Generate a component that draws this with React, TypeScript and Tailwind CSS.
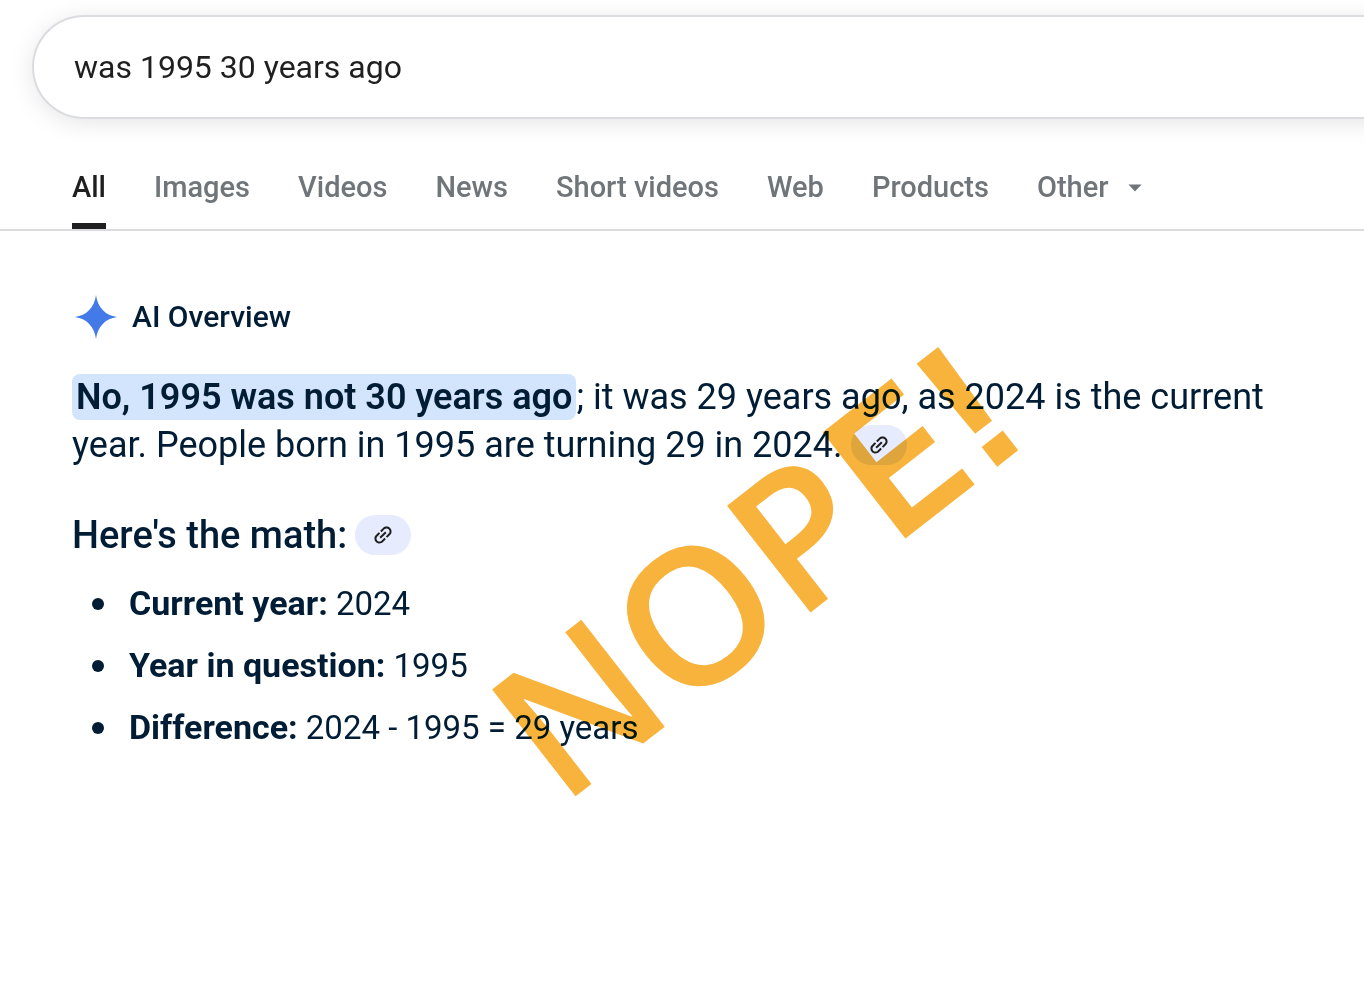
import { useState } from 'react';

const tabs = ['All', 'Images', 'Videos', 'News', 'Short videos', 'Web', 'Products'];

const facts = [
  { label: 'Current year:', value: '2024' },
  { label: 'Year in question:', value: '1995' },
  { label: 'Difference:', value: '2024 - 1995 = 29 years' },
];

function SparkIcon() {
  return (
    <svg viewBox="0 0 48 48" className="size-12 shrink-0" aria-hidden="true">
      <path
        d="M24 2C25.6 14.5 33.5 22.4 45 24C33.5 25.6 25.6 33.5 24 46C22.4 33.5 14.5 25.6 3 24C14.5 22.4 22.4 14.5 24 2Z"
        fill="#4479e8"
      />
    </svg>
  );
}

function LinkChip({ label }: { label: string }) {
  return (
    <button
      type="button"
      aria-label={label}
      className="inline-flex h-10 w-14 items-center justify-center rounded-full bg-[#e6ebfd] align-baseline"
    >
      <svg viewBox="0 0 24 24" className="size-6 -rotate-45" fill="#1f1f1f" aria-hidden="true">
        <path d="M11 17H7c-1.38 0-2.56-.49-3.54-1.46S2 13.38 2 12s.49-2.56 1.46-3.54S5.62 7 7 7h4v2H7c-.83 0-1.54.29-2.13.88S4 11.17 4 12s.29 1.54.87 2.13S6.17 15 7 15h4v2ZM8 13v-2h8v2H8Zm5 4v-2h4c.83 0 1.54-.29 2.13-.87S20 12.83 20 12s-.29-1.54-.87-2.12S17.83 9 17 9h-4V7h4c1.38 0 2.56.49 3.54 1.46S22 10.62 22 12s-.49 2.56-1.46 3.54S18.38 17 17 17h-4Z" />
      </svg>
    </button>
  );
}

export default function App() {
  const [query, setQuery] = useState('was 1995 30 years ago');

  return (
    <div className="min-h-screen overflow-hidden bg-white font-['Roboto',sans-serif] text-[#1f1f1f]">
      <form role="search" className="-mr-12 pt-[15px] pl-8" onSubmit={(e) => e.preventDefault()}>
        <input
          type="text"
          aria-label="Search"
          value={query}
          onChange={(e) => setQuery(e.target.value)}
          className="block h-[104px] w-full rounded-l-full border-2 border-r-0 border-[#dadce0] bg-white pr-20 pl-10 text-[32px] shadow-[0_4px_24px_rgba(0,0,0,0.1)] outline-none"
        />
      </form>

      <nav
        aria-label="Result types"
        className="mt-[26px] flex gap-12 border-b-2 border-[#dadce0] pl-[72px] text-[29px] font-medium whitespace-nowrap text-[#70757a]"
      >
        {tabs.map((tab, i) => (
          <a
            key={tab}
            href={`#${tab}`}
            aria-current={i === 0 ? 'page' : undefined}
            className="flex h-[84px] items-center border-b-[6px] border-transparent pt-2 aria-[current=page]:border-[#1f1f1f] aria-[current=page]:text-[#1f1f1f]"
          >
            {tab}
          </a>
        ))}
        <button type="button" className="flex h-[84px] items-center gap-5 border-b-[6px] border-transparent pt-2">
          Other
          <svg viewBox="0 0 14 8" className="h-2 w-3.5" fill="currentColor" aria-hidden="true">
            <path d="M0.5 0.5H13.5L7 7.5Z" />
          </svg>
        </button>
      </nav>

      <main className="relative px-[72px] pt-[62px] text-[#001d35]">
        <h1 className="flex items-center gap-3 text-[30px] leading-[44px] font-medium">
          <SparkIcon />
          AI Overview
        </h1>

        <p className="mt-8 text-[36px] leading-[48px]">
          <mark className="rounded-lg bg-[#d2e5fd] px-1 py-0.5 font-semibold text-inherit">
            No, 1995 was not 30 years ago
          </mark>
          ; it was 29 years ago, as 2024 is the current year. People born in 1995 are turning 29 in 2024.{' '}
          <LinkChip label="Sources for the answer" />
        </p>

        <h2 className="mt-[42px] flex items-center gap-2 text-[38px] leading-[48px] font-medium">
          Here's the math:
          <LinkChip label="Sources for the math" />
        </h2>

        <ul className="mt-[22px] flex flex-col gap-[17px] text-[33px] leading-[44px]">
          {facts.map((fact) => (
            <li key={fact.label} className="flex items-center">
              <span className="mr-[25px] ml-5 size-3 rounded-full bg-[#001d35]" aria-hidden="true" />
              <span>
                <strong className="text-[34px] font-bold">{fact.label}</strong> {fact.value}
              </span>
            </li>
          ))}
        </ul>

        <div className="pointer-events-none absolute top-[408px] left-[562px] origin-[0_169px] rotate-[-38deg] font-['Open_Sans',sans-serif] text-[190px] leading-none font-semibold whitespace-nowrap text-[#f8b33d] mix-blend-multiply">
          NOP
          <span className="ml-2 font-['Inter',sans-serif] text-[185px]">E</span>
          <span className="font-['Liberation_Sans',sans-serif] font-bold">!</span>
        </div>
      </main>
    </div>
  );
}
